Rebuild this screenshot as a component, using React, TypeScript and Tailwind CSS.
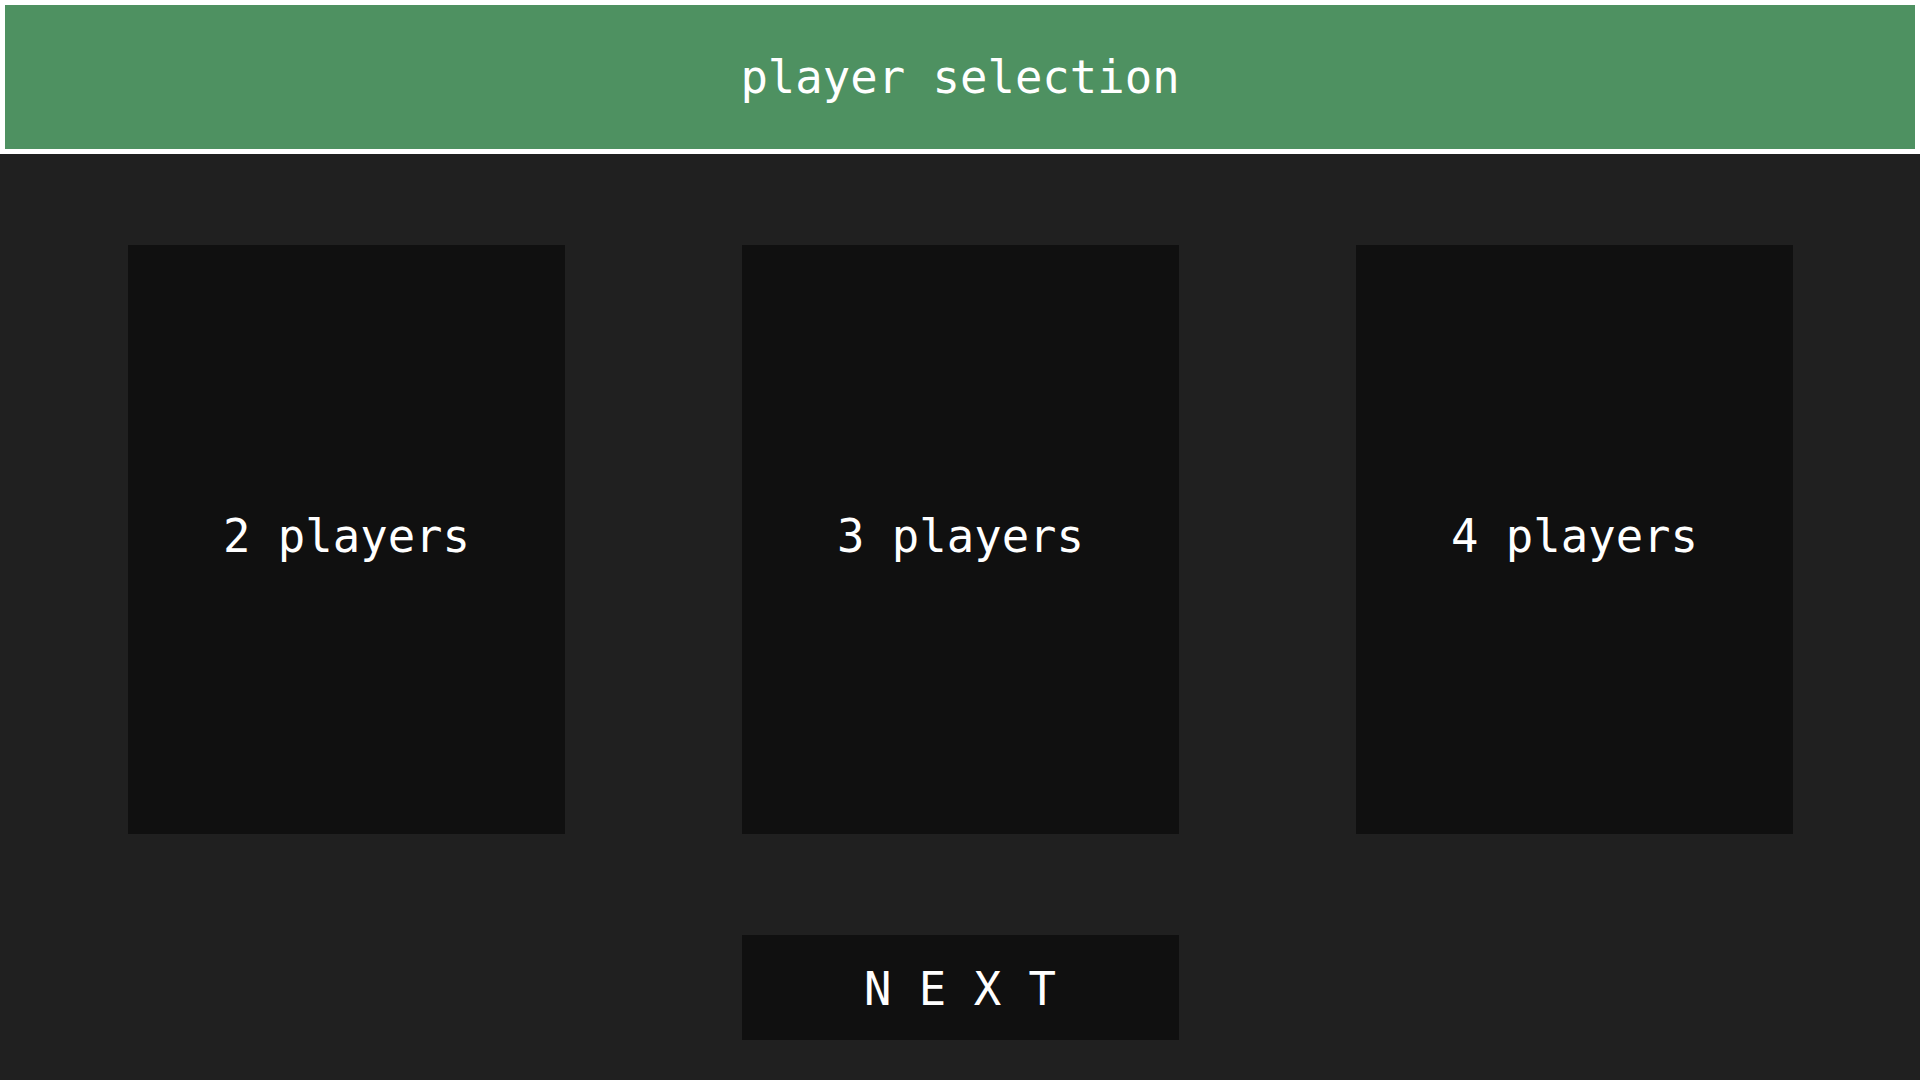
const PLAYER_OPTIONS = [2, 3, 4]

export default function App() {
  return (
    <div
      className="w-full h-[1080px] bg-[#202020] flex flex-col overflow-hidden"
      style={{ fontFamily: '"DejaVu Sans Mono", "Liberation Mono", monospace' }}
    >
      {/* Title bar */}
      <div className="h-[154px] shrink-0 border-[5px] border-white bg-[#4e9161] flex items-center justify-center pt-[2px]">
        <h1 className="text-[45.6px] leading-none text-white">player selection</h1>
      </div>

      {/* Player count cards */}
      <div className="flex gap-[177px] pl-[128px] pr-[127px] pt-[91px]">
        {PLAYER_OPTIONS.map(n => (
          <button
            key={n}
            className="w-[437px] h-[589px] bg-[#101010] flex items-center justify-center pb-[6px] text-[45.6px] leading-none text-white"
          >
            {n} players
          </button>
        ))}
      </div>

      {/* Next */}
      <div className="flex justify-center pt-[101px]">
        <button className="w-[437px] h-[105px] bg-[#101010] flex items-center justify-center pt-[5px] text-[45.6px] leading-none text-white">
          N E X T
        </button>
      </div>
    </div>
  )
}
